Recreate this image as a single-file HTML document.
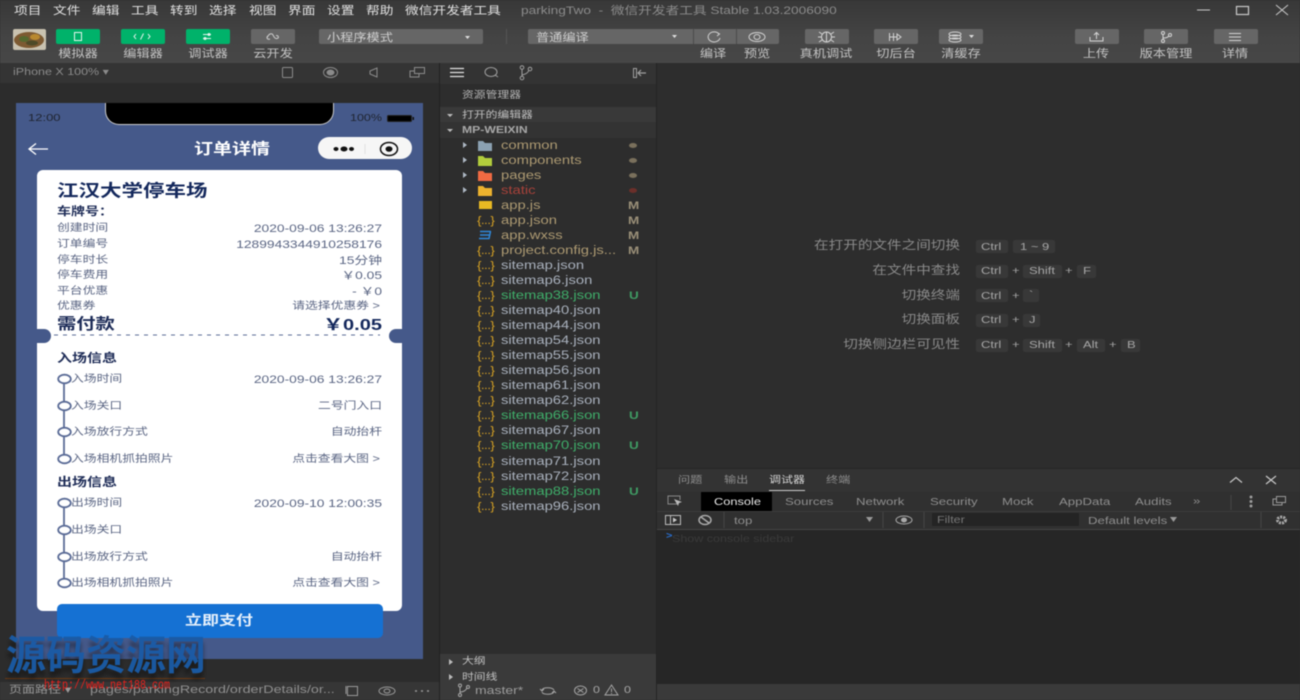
<!DOCTYPE html>
<html lang="zh"><head><meta charset="utf-8"><title>parkingTwo</title>
<style>
html,body{margin:0;padding:0;background:#2d2d2d;overflow:hidden}
#root{position:relative;width:1300px;height:700px;overflow:hidden;background:#2d2d2d;font-family:"Liberation Sans","Noto Sans CJK SC",sans-serif;filter:blur(.45px)}
.b{position:absolute}
.t{position:absolute;white-space:nowrap;line-height:16px;height:16px;margin-top:-8px;transform:scaleY(.8);transform-origin:left center;font-size:13px;color:#c8c8c8}
.r{transform-origin:right center}
.c{transform-origin:center center;text-align:center;width:100px;margin-left:-50px}
.m{font-size:13.7px;color:#e2e2e2;margin-top:-7.5px}
.tb{font-size:13.2px;color:#c4c4c4;margin-top:-7.5px}
.btn{position:absolute;top:29px;height:15px;width:44px;border-radius:2px;background:#666}
.g{background:#00b26a}
.tr{font-size:14.8px;color:#a9b1bd;left:501px;margin-top:-7px}
.mod{color:#ad9a72}.new{color:#3fae6a}
.js{left:477px;font-size:13.5px;color:#d6a224;letter-spacing:-.6px;margin-top:-7px}
.gs{left:628px;font-size:13.5px;font-weight:bold;color:#9a8f78;margin-top:-7px}
.us{left:629px;font-size:13.5px;font-weight:bold;color:#3f9a63;margin-top:-7px}
.dot{position:absolute;left:629px;width:8px;height:5px;border-radius:50%;background:#7a705c}
.p{font-size:12.8px;color:#5b6684}
.pl{font-size:13.8px;color:#5b6684;margin-top:-7.5px}
.k{position:absolute;height:13px;background:#383838;border-radius:2px}
.kt{font-size:13px;color:#a6a6a6}
.h{font-size:14.6px;color:#8a8a8a}
.dt{font-size:13.2px;color:#8e8e8e;margin-top:-7.5px}
.dc{font-size:12.2px;color:#8e8e8e}
svg{position:absolute;overflow:visible}
</style></head><body>
<div id="root">

<!-- top chrome -->
<div class="b" style="left:0;top:0;width:1300px;height:63px;background:linear-gradient(#383838,#444 60%,#474747)"></div>
<span class="t m" style="left:14px;top:10px">项目</span><span class="t m" style="left:53px;top:10px">文件</span><span class="t m" style="left:92px;top:10px">编辑</span><span class="t m" style="left:131px;top:10px">工具</span><span class="t m" style="left:170px;top:10px">转到</span><span class="t m" style="left:209px;top:10px">选择</span><span class="t m" style="left:249px;top:10px">视图</span><span class="t m" style="left:288px;top:10px">界面</span><span class="t m" style="left:327px;top:10px">设置</span><span class="t m" style="left:366px;top:10px">帮助</span><span class="t m" style="left:405px;top:10px">微信开发者工具</span>
<span class="t" style="left:521px;top:10px;font-size:13.7px;color:#8b8b8b;margin-top:-7.5px">parkingTwo &nbsp;-&nbsp; 微信开发者工具 Stable 1.03.2006090</span>
<svg style="left:0;top:0" width="1300" height="20" fill="none" stroke="#c9c9c9"><path d="M1197 10h13"/><rect x="1236.5" y="6.5" width="12" height="8" stroke-width="1.2"/><path d="M1276 5l12 10M1288 5l-12 10"/></svg>

<!-- avatar -->
<svg style="left:13px;top:29px" width="33" height="21"><rect width="33" height="21" rx="2" fill="#c9c2b0"/><ellipse cx="16" cy="11" rx="15" ry="8" fill="#7d5a32"/><ellipse cx="11" cy="10" rx="5" ry="3" fill="#55682f"/><ellipse cx="22" cy="8" rx="5" ry="3" fill="#b9892f"/><ellipse cx="19" cy="14" rx="6" ry="2.500" fill="#4e4a28"/></svg>

<div class="btn g" style="left:56px"></div><div class="btn g" style="left:121px"></div><div class="btn g" style="left:186px"></div><div class="btn" style="left:251px"></div>
<svg style="left:0;top:29px" width="300" height="15" fill="none" stroke="#e6f5ee"><rect x="74.500" y="3.500" width="7" height="8" stroke-width="1"/><path d="M136 5l-2 2.500 2 2.500M148 5l2 2.500-2 2.500M143.500 4.500l-3 6" stroke-width="1"/><path d="M203 5.500h8M203 9.500h8" stroke-width="1"/><circle cx="209" cy="5.500" r="1"/><circle cx="205" cy="9.500" r="1"/><path d="M267 9c2-5 5-5 6-3s2 4 4 3.500 2-3-1-3M270 10c-3 1-4-2-2-3" stroke="#ccc"/></svg>
<span class="t tb c" style="left:78px;top:53px">模拟器</span><span class="t tb c" style="left:143px;top:53px">编辑器</span><span class="t tb c" style="left:208px;top:53px">调试器</span><span class="t tb c" style="left:273px;top:53px">云开发</span>

<div class="btn" style="left:319px;width:164px"></div>
<span class="t tb" style="left:327px;top:37px;color:#cfcfcf">小程序模式</span>
<svg style="left:464px;top:35px" width="8" height="5"><path d="M1 1h5l-2.500 3z" fill="#ddd"/></svg>
<div class="b" style="left:506px;top:29px;width:1px;height:15px;background:#555"></div>
<div class="btn" style="left:528px;width:251px"></div>
<span class="t tb" style="left:536px;top:37px;color:#cfcfcf">普通编译</span>
<svg style="left:0;top:29px" width="1300" height="15" fill="none" stroke="#d0d0d0">
<path d="M672 6h5l-2.500 3z" fill="#ddd" stroke="none"/>
<path d="M693.500 0v15M736.500 0v15" stroke="#4b4b4b"/>
<path d="M719 5a6 5 0 1 0 1 4M716 3l3.500 2-2.500 2"/>
<ellipse cx="757" cy="8" rx="8" ry="4.500"/><ellipse cx="757" cy="8" rx="3" ry="2.500"/></svg>
<span class="t tb c" style="left:713px;top:53px">编译</span><span class="t tb c" style="left:757px;top:53px">预览</span>

<div class="btn" style="left:805px"></div><div class="btn" style="left:874px"></div><div class="btn" style="left:939px"></div><div class="btn" style="left:1075px"></div><div class="btn" style="left:1144px"></div><div class="btn" style="left:1214px"></div>
<svg style="left:0;top:29px" width="1300" height="15" fill="none" stroke="#d4d4d4">
<ellipse cx="826.500" cy="8" rx="5" ry="5"/><path d="M826.500 3v10M822 5l-3-2M831 5l3-2M821 8h-3M832 8h3M822 11l-3 2M831 11l3 2"/>
<path d="M889.500 4v8M893.500 4v8M890 8h7M897 5l4 3-4 3z"/>
<ellipse cx="955" cy="5" rx="6" ry="2"/><ellipse cx="955" cy="8" rx="6" ry="2"/><ellipse cx="955" cy="11" rx="6" ry="2"/><path d="M969 6h5l-2.500 3z" fill="#ddd" stroke="none"/>
<path d="M1090 8v4h13V8M1096.500 10V3.500M1094 6l2.500-2.500 2.500 2.500"/>
<circle cx="1163" cy="4" r="1.500"/><circle cx="1163" cy="12" r="1.500"/><circle cx="1170" cy="6" r="1.500"/><path d="M1163 5.500v5M1163 9c4 0 5-1 6-2"/>
<path d="M1229 4.500h12M1229 8h12M1229 11.500h12"/></svg>
<span class="t tb c" style="left:826px;top:53px">真机调试</span><span class="t tb c" style="left:896px;top:53px">切后台</span><span class="t tb c" style="left:961px;top:53px">清缓存</span><span class="t tb c" style="left:1096px;top:53px">上传</span><span class="t tb c" style="left:1166px;top:53px">版本管理</span><span class="t tb c" style="left:1235px;top:53px">详情</span>

<!-- simulator panel -->
<div class="b" style="left:0;top:63px;width:439px;height:20px;background:#343434"></div>
<div class="b" style="left:0;top:83px;width:439px;height:617px;background:#2c2c2c"></div>
<div class="b" style="left:439px;top:63px;width:1px;height:637px;background:#222"></div>
<span class="t" style="left:13px;top:72px;font-size:12.500px;color:#8b8b8b">iPhone X 100% ▾</span>
<svg style="left:0;top:63px" width="439" height="20" fill="none" stroke="#8b8b8b"><rect x="282.500" y="4.500" width="10" height="10" rx="1"/><ellipse cx="330.500" cy="9.500" rx="7" ry="5"/><ellipse cx="330.500" cy="9.500" rx="3.500" ry="2.500" fill="#8b8b8b"/><path d="M377 5v9l-7-3v-3z"/><rect x="414.500" y="4.500" width="10" height="6"/><path d="M414 8h-4v6h9v-3"/></svg>

<!-- phone -->
<div class="b" style="left:16px;top:103px;width:407px;height:556px;background:#45598a"></div>
<div class="b" style="left:105px;top:103px;width:229px;height:22px;background:#000;border-radius:0 0 14px 14px;border:1px solid #ccc;border-top:0;box-sizing:border-box"></div>
<span class="t" style="left:28px;top:118px;font-size:13px;color:#1f2430">12:00</span>
<span class="t" style="left:350px;top:118px;font-size:12.500px;color:#1f2430">100%</span>
<svg style="left:387px;top:115px" width="28" height="8"><rect x=".5" y=".5" width="24" height="6" rx="1" fill="#000" stroke="#222"/><rect x="25.500" y="2" width="1.500" height="3" fill="#111"/></svg>
<svg style="left:28px;top:142px" width="22" height="14" fill="none" stroke="#fff" stroke-width="1.300"><path d="M1 7h19M8 1.500L1 7l7 5.500"/></svg>
<span class="t c" style="left:232px;top:150px;font-size:19px;font-weight:bold;color:#fff">订单详情</span>
<div class="b" style="left:318px;top:137px;width:94px;height:22px;border-radius:11px;background:#f6f6f6"></div>
<svg style="left:318px;top:137px" width="94" height="22"><ellipse cx="18" cy="12" rx="2.500" ry="2" fill="#111"/><ellipse cx="26" cy="12" rx="3.500" ry="2.500" fill="#111"/><ellipse cx="33.500" cy="12" rx="2.500" ry="2" fill="#111"/><path d="M47 7v10" stroke="#e2e2e2"/><ellipse cx="71" cy="12" rx="8.500" ry="6.500" fill="none" stroke="#111" stroke-width="1.500"/><ellipse cx="71" cy="12" rx="3.500" ry="2.800" fill="#111"/></svg>

<!-- card -->
<div class="b" style="left:37px;top:170px;width:365px;height:441px;background:#fff;border-radius:6px"></div>
<span class="t" style="left:57px;top:191px;font-size:21.500px;font-weight:bold;color:#14285c">江汉大学停车场</span>
<span class="t" style="left:57px;top:211px;font-size:14px;font-weight:bold;color:#1f2d58">车牌号：</span>

<span class="t p" style="left:57px;top:228px">创建时间</span><span class="t pl r" style="right:918px;top:228px">2020-09-06 13:26:27</span>
<span class="t p" style="left:57px;top:244px">订单编号</span><span class="t pl r" style="right:918px;top:244px">1289943344910258176</span>
<span class="t p" style="left:57px;top:260px">停车时长</span><span class="t pl r" style="right:918px;top:260px">15分钟</span>
<span class="t p" style="left:57px;top:275px">停车费用</span><span class="t pl r" style="right:918px;top:275px">￥0.05</span>
<span class="t p" style="left:57px;top:291px">平台优惠</span><span class="t pl r" style="right:918px;top:291px">- ￥0</span>
<span class="t p" style="left:57px;top:306px">优惠券</span><span class="t p r" style="right:920px;top:306px">请选择优惠券 &gt;</span>

<span class="t" style="left:57px;top:325px;font-size:19.300px;font-weight:bold;color:#1d2c58">需付款</span>
<span class="t r" style="right:918px;top:325px;font-size:20px;font-weight:bold;color:#14285c">￥0.05</span>
<svg style="left:0;top:330px" width="440" height="10" fill="none"><path d="M54 5H380" stroke="#5a6b96" stroke-dasharray="4 5"/></svg>
<div class="b" style="left:37px;top:329px;width:14px;height:14px;border-radius:0 8px 8px 0;background:#45598a"></div>
<div class="b" style="left:389px;top:329px;width:13px;height:14px;border-radius:8px 0 0 8px;background:#45598a"></div>

<span class="t" style="left:57px;top:359px;font-size:15px;font-weight:bold;color:#1f2d58">入场信息</span>
<span class="t" style="left:57px;top:483px;font-size:15px;font-weight:bold;color:#1f2d58">出场信息</span>
<svg style="left:0;top:0" width="100" height="700" fill="#fff" stroke="#5a6b96" stroke-width="1.800">
<path d="M64 384v17M64 411v17M64 437v18M64 508v18M64 535v18M64 562v17"/>
<ellipse cx="64.500" cy="379" rx="6.300" ry="4.300"/><ellipse cx="64.500" cy="406" rx="6.300" ry="4.300"/><ellipse cx="64.500" cy="432" rx="6.300" ry="4.300"/><ellipse cx="64.500" cy="459" rx="6.300" ry="4.300"/>
<ellipse cx="64.500" cy="503" rx="6.300" ry="4.300"/><ellipse cx="64.500" cy="530" rx="6.300" ry="4.300"/><ellipse cx="64.500" cy="557" rx="6.300" ry="4.300"/><ellipse cx="64.500" cy="583" rx="6.300" ry="4.300"/></svg>

<span class="t p" style="left:71px;top:379px">入场时间</span><span class="t pl r" style="right:918px;top:379px">2020-09-06 13:26:27</span>
<span class="t p" style="left:71px;top:406px">入场关口</span><span class="t p r" style="right:918px;top:406px">二号门入口</span>
<span class="t p" style="left:71px;top:432px">入场放行方式</span><span class="t p r" style="right:918px;top:432px">自动抬杆</span>
<span class="t p" style="left:71px;top:459px">入场相机抓拍照片</span><span class="t p r" style="right:920px;top:459px">点击查看大图 &gt;</span>
<span class="t p" style="left:71px;top:503px">出场时间</span><span class="t pl r" style="right:918px;top:503px">2020-09-10 12:00:35</span>
<span class="t p" style="left:71px;top:530px">出场关口</span>
<span class="t p" style="left:71px;top:557px">出场放行方式</span><span class="t p r" style="right:918px;top:557px">自动抬杆</span>
<span class="t p" style="left:71px;top:583px">出场相机抓拍照片</span><span class="t p r" style="right:920px;top:583px">点击查看大图 &gt;</span>

<div class="b" style="left:57px;top:604px;width:326px;height:34px;border-radius:5px;background:#1571d3"></div>
<span class="t c" style="left:219px;top:621px;font-size:17px;color:#e6f0fb;font-weight:bold">立即支付</span>

<!-- bottom bar left -->
<div class="b" style="left:0;top:682px;width:439px;height:18px;background:#363636"></div>
<div class="b" style="left:5px;top:678px;width:200px;height:1px;background:#6b3a14"></div>
<span class="t" style="left:9px;top:690px;font-size:13px;color:#999">页面路径 ▾</span>
<span class="t" style="left:90px;top:690px;font-size:14.300px;color:#8f8f8f">pages/parkingRecord/orderDetails/or...</span>
<svg style="left:0;top:682px" width="439" height="18" fill="none" stroke="#999"><rect x="347.500" y="4.500" width="10" height="9"/><path d="M346 4v8"/><ellipse cx="387" cy="9" rx="8" ry="4"/><ellipse cx="387" cy="9" rx="3" ry="2"/><path d="M415 9h2M421 9h2M427 9h2" stroke-width="1.500"/></svg>

<!-- watermark -->
<span class="t" style="left:6px;top:656px;height:50px;line-height:50px;margin-top:-25px;font-size:40px;font-weight:bold;color:#1a5ba6;opacity:.95;letter-spacing:0;transform:scaleY(1.02);text-shadow:0 6px 5px rgba(0,0,0,.45)">源码资源网</span>
<span class="t" style="left:44px;top:687px;font-family:'Liberation Mono',monospace;font-size:10px;color:#e8201c;transform:scaleY(1.25)">http://www.net188.com</span>

<!-- explorer -->
<div class="b" style="left:440px;top:63px;width:216px;height:637px;background:#2d2d2d"></div>
<div class="b" style="left:440px;top:63px;width:216px;height:21px;background:#333"></div>
<div class="b" style="left:656px;top:63px;width:1px;height:637px;background:#242424"></div>
<svg style="left:440px;top:63px" width="216" height="21" fill="none" stroke="#a0a0a0"><path d="M10 5.500h14M10 9.500h14M10 13.500h14" stroke="#e2e2e2" stroke-width="1.300"/><ellipse cx="51" cy="9" rx="6" ry="4.500"/><path d="M55 12l3 2"/><circle cx="82" cy="4.500" r="1.800"/><circle cx="82" cy="15" r="1.800"/><circle cx="90" cy="6" r="1.800"/><path d="M82 6.500v7M82 12c4-1 6-2 7-5"/><rect x="193.500" y="5.500" width="3" height="9"/><path d="M198 10h8M201 7l-3 3 3 3" stroke-width="1.200"/></svg>
<span class="t" style="left:462px;top:95px;font-size:11.800px;color:#b5b5b5">资源管理器</span>
<div class="b" style="left:440px;top:107px;width:216px;height:15px;background:#393939"></div>
<div class="b" style="left:440px;top:122px;width:216px;height:16px;background:#333"></div>
<svg style="left:446px;top:112px" width="10" height="22" fill="#bbb"><path d="M1 2h6L4 5zM1 17h6l-3 3z"/></svg>
<span class="t" style="left:462px;top:115px;font-size:11.800px;color:#c0c0c0">打开的编辑器</span>
<span class="t" style="left:462px;top:130px;font-size:12.200px;font-weight:bold;color:#a8a8a8">MP-WEIXIN</span>

<svg style="left:462px;top:140px" width="34" height="60"><path d="M1 2l4 3-4 3zM1 17l4 3-4 3zM1 32l4 3-4 3zM1 47l4 3-4 3z" fill="#aeb8c4"/>
<path d="M16 1h5l2 2h7v8H16z" fill="#8ba1b2"/><path d="M16 16h5l2 2h7v8H16z" fill="#b2cc3c"/><path d="M16 31h5l2 2h7v8H16z" fill="#f16a42"/><path d="M16 46h5l2 2h7v8H16z" fill="#ecb22e"/></svg>
<span class="t tr mod" style="top:145px">common</span><div class="dot" style="top:143px"></div>
<span class="t tr mod" style="top:160px">components</span><div class="dot" style="top:158px"></div>
<span class="t tr mod" style="top:175px">pages</span><div class="dot" style="top:173px"></div>
<span class="t tr" style="top:190px;color:#a8423a">static</span><div class="dot" style="top:188px;background:#6b2f2a"></div>
<div class="b" style="left:479px;top:201px;width:13px;height:8px;background:#e8b923"></div>
<span class="t tr mod" style="top:205px">app.js</span><span class="t gs" style="top:205px">M</span>
<span class="t js" style="top:220px">{...}</span><span class="t tr mod" style="top:220px">app.json</span><span class="t gs" style="top:220px">M</span>
<svg style="left:478px;top:230px" width="15" height="10" fill="none" stroke="#2f87d8" stroke-width="1.500"><path d="M2 1.500h11M2 5h10M1 8.500h10l1.500-7"/></svg>
<span class="t tr mod" style="top:235px">app.wxss</span><span class="t gs" style="top:235px">M</span>
<span class="t js" style="top:250px">{...}</span><span class="t tr mod" style="top:250px">project.config.js...</span><span class="t gs" style="top:250px">M</span>
<span class="t js" style="top:265px">{...}</span><span class="t tr" style="top:265px">sitemap.json</span>
<span class="t js" style="top:280px">{...}</span><span class="t tr" style="top:280px">sitemap6.json</span>
<span class="t js" style="top:295px">{...}</span><span class="t tr new" style="top:295px">sitemap38.json</span><span class="t us" style="top:295px">U</span>
<span class="t js" style="top:310px">{...}</span><span class="t tr" style="top:310px">sitemap40.json</span>
<span class="t js" style="top:325px">{...}</span><span class="t tr" style="top:325px">sitemap44.json</span>
<span class="t js" style="top:340px">{...}</span><span class="t tr" style="top:340px">sitemap54.json</span>
<span class="t js" style="top:355px">{...}</span><span class="t tr" style="top:355px">sitemap55.json</span>
<span class="t js" style="top:370px">{...}</span><span class="t tr" style="top:370px">sitemap56.json</span>
<span class="t js" style="top:385px">{...}</span><span class="t tr" style="top:385px">sitemap61.json</span>
<span class="t js" style="top:400px">{...}</span><span class="t tr" style="top:400px">sitemap62.json</span>
<span class="t js" style="top:415px">{...}</span><span class="t tr new" style="top:415px">sitemap66.json</span><span class="t us" style="top:415px">U</span>
<span class="t js" style="top:430px">{...}</span><span class="t tr" style="top:430px">sitemap67.json</span>
<span class="t js" style="top:445px">{...}</span><span class="t tr new" style="top:445px">sitemap70.json</span><span class="t us" style="top:445px">U</span>
<span class="t js" style="top:461px">{...}</span><span class="t tr" style="top:461px">sitemap71.json</span>
<span class="t js" style="top:476px">{...}</span><span class="t tr" style="top:476px">sitemap72.json</span>
<span class="t js" style="top:491px">{...}</span><span class="t tr new" style="top:491px">sitemap88.json</span><span class="t us" style="top:491px">U</span>
<span class="t js" style="top:506px">{...}</span><span class="t tr" style="top:506px">sitemap96.json</span>

<div class="b" style="left:440px;top:654px;width:216px;height:46px;background:#3a3a3a"></div>
<svg style="left:448px;top:658px" width="8" height="24" fill="#bbb"><path d="M1 1l4 3-4 3zM1 16l4 3-4 3z"/></svg>
<span class="t" style="left:462px;top:661px;font-size:11.800px;color:#c0c0c0">大纲</span>
<span class="t" style="left:462px;top:677px;font-size:11.800px;color:#c0c0c0">时间线</span>

<!-- editor hints -->
<span class="t h r" style="right:340px;top:246px">在打开的文件之间切换</span>
<span class="t h r" style="right:340px;top:271px">在文件中查找</span>
<span class="t h r" style="right:340px;top:296px">切换终端</span>
<span class="t h r" style="right:340px;top:320px">切换面板</span>
<span class="t h r" style="right:340px;top:345px">切换侧边栏可见性</span>

<div class="k" style="left:976px;top:240px;width:32px"></div><div class="k" style="left:1013px;top:240px;width:42px"></div>
<span class="t kt" style="left:981px;top:247px">Ctrl</span><span class="t kt" style="left:1020px;top:247px">1 ~ 9</span>
<div class="k" style="left:976px;top:265px;width:32px"></div><div class="k" style="left:1023px;top:265px;width:39px"></div><div class="k" style="left:1077px;top:265px;width:19px"></div>
<span class="t kt" style="left:981px;top:271px">Ctrl</span><span class="t kt" style="left:1012px;top:271px">+</span><span class="t kt" style="left:1029px;top:271px">Shift</span><span class="t kt" style="left:1065px;top:271px">+</span><span class="t kt" style="left:1083px;top:271px">F</span>
<div class="k" style="left:976px;top:289px;width:32px"></div><div class="k" style="left:1023px;top:289px;width:16px"></div>
<span class="t kt" style="left:981px;top:296px">Ctrl</span><span class="t kt" style="left:1012px;top:296px">+</span><span class="t kt" style="left:1029px;top:295px">`</span>
<div class="k" style="left:976px;top:314px;width:32px"></div><div class="k" style="left:1023px;top:314px;width:17px"></div>
<span class="t kt" style="left:981px;top:320px">Ctrl</span><span class="t kt" style="left:1012px;top:320px">+</span><span class="t kt" style="left:1029px;top:320px">J</span>
<div class="k" style="left:976px;top:339px;width:32px"></div><div class="k" style="left:1023px;top:339px;width:39px"></div><div class="k" style="left:1077px;top:339px;width:28px"></div><div class="k" style="left:1121px;top:339px;width:19px"></div>
<span class="t kt" style="left:981px;top:345px">Ctrl</span><span class="t kt" style="left:1012px;top:345px">+</span><span class="t kt" style="left:1029px;top:345px">Shift</span><span class="t kt" style="left:1065px;top:345px">+</span><span class="t kt" style="left:1083px;top:345px">Alt</span><span class="t kt" style="left:1109px;top:345px">+</span><span class="t kt" style="left:1127px;top:345px">B</span>

<!-- debugger -->
<div class="b" style="left:657px;top:468px;width:643px;height:24px;background:#333;border-top:1px solid #252525;box-sizing:border-box"></div>
<div class="b" style="left:657px;top:492px;width:643px;height:19px;background:#303030"></div>
<div class="b" style="left:657px;top:511px;width:643px;height:18px;background:#303030;border-top:1px solid #3c3c3c"></div>
<div class="b" style="left:657px;top:529px;width:643px;height:1px;background:#454545"></div>
<div class="b" style="left:657px;top:530px;width:643px;height:154px;background:#262626"></div>
<div class="b" style="left:657px;top:684px;width:643px;height:16px;background:#3a3a3a"></div>
<span class="t dc" style="left:678px;top:480px">问题</span><span class="t dc" style="left:724px;top:480px">输出</span><span class="t" style="left:769px;top:480px;font-size:12px;color:#d8d8d8">调试器</span><span class="t dc" style="left:826px;top:480px">终端</span>
<div class="b" style="left:769px;top:490px;width:36px;height:1px;background:#ccc"></div>
<svg style="left:0;top:470px" width="1300" height="20" fill="none" stroke="#c8c8c8" stroke-width="1.200"><path d="M1230 12.500l6-5 6 5M1266 6l10 8M1276 6l-10 8"/></svg>
<div class="b" style="left:701px;top:492px;width:71px;height:19px;background:#000"></div>
<span class="t" style="left:714px;top:501px;font-size:12.800px;color:#e8e8e8;margin-top:-7.5px">Console</span>
<span class="t dt" style="left:785px;top:501px">Sources</span><span class="t dt" style="left:856px;top:501px">Network</span><span class="t dt" style="left:930px;top:501px">Security</span><span class="t dt" style="left:1002px;top:501px">Mock</span><span class="t dt" style="left:1059px;top:501px">AppData</span><span class="t dt" style="left:1135px;top:501px">Audits</span><span class="t dt" style="left:1193px;top:500px">»</span>
<svg style="left:0;top:492px" width="1300" height="38" fill="none" stroke="#999">
<path d="M678 12h-10V4h12v4" stroke="#888"/><path d="M674 7l8 3-3 1-1 3z" fill="#bbb" stroke="none"/>
<path d="M1231 3v15" stroke="#444"/><circle cx="1251" cy="5" r="1" fill="#aaa"/><circle cx="1251" cy="9.500" r="1" fill="#aaa"/><circle cx="1251" cy="14" r="1" fill="#aaa"/><rect x="1276.500" y="4.500" width="9" height="6"/><path d="M1276 7h-3v6h9v-2"/>
<rect x="665.500" y="23.500" width="15" height="9" stroke="#bbb"/><path d="M670.500 24v8" stroke="#bbb"/><path d="M673 25.500l4 2.500-4 2.500z" fill="#ccc" stroke="none"/>
<ellipse cx="705" cy="28" rx="6" ry="4.500" stroke="#aaa" stroke-width="1.500"/><path d="M701 25l8 6" stroke="#aaa" stroke-width="1.500"/>
<path d="M724 20v16M883 20v16M924 20v16M1261 20v16" stroke="#444"/>
<path d="M866 25h7l-3.500 5z" fill="#999" stroke="none"/>
<ellipse cx="904" cy="28" rx="8" ry="4" stroke="#aaa"/><ellipse cx="904" cy="28" rx="3" ry="2.500" fill="#aaa" stroke="none"/>
<path d="M1170 25h7l-3.500 5z" fill="#999" stroke="none"/>
<ellipse cx="1281.500" cy="28" rx="4" ry="3" stroke="#aaa" stroke-width="3" stroke-dasharray="2 1"/></svg>
<span class="t dt" style="left:734px;top:520px">top</span>
<div class="b" style="left:932px;top:513px;width:147px;height:13px;background:#242424"></div>
<span class="t" style="left:937px;top:520px;font-size:12.500px;color:#777">Filter</span>
<span class="t dt" style="left:1088px;top:520px">Default levels</span>
<span class="t" style="left:666px;top:536px;font-size:11px;font-weight:bold;color:#2a6fd0">&gt;</span>
<span class="t" style="left:672px;top:539px;font-size:12.500px;color:#3a3a3a">Show console sidebar</span>

<!-- status -->
<svg style="left:440px;top:682px" width="220" height="18" fill="none" stroke="#a6a6a6"><circle cx="20" cy="3.500" r="1.500"/><circle cx="20" cy="13" r="1.500"/><circle cx="28" cy="5" r="1.500"/><path d="M20 5v6.500M20 10c4 0 6-2 7-4"/>
<path d="M102 8c1-3 10-3 12 0M114 10c-2 3-11 3-12 0M100 7l2 2 2-2M112 11l2-2 2 2"/>
<ellipse cx="140.500" cy="8.500" rx="6" ry="4.500"/><path d="M137.500 6.500l6 4M143.500 6.500l-6 4"/><path d="M165 13h13l-6.500-10z"/><path d="M171.500 6.500v3.500M171.500 11v1"/></svg>
<span class="t" style="left:475px;top:690px;font-size:14px;color:#9c9c9c">master*</span>
<span class="t" style="left:593px;top:690px;font-size:12.500px;color:#a6a6a6">0</span>
<span class="t" style="left:624px;top:690px;font-size:12.500px;color:#a6a6a6">0</span>
</div>
</body></html>
